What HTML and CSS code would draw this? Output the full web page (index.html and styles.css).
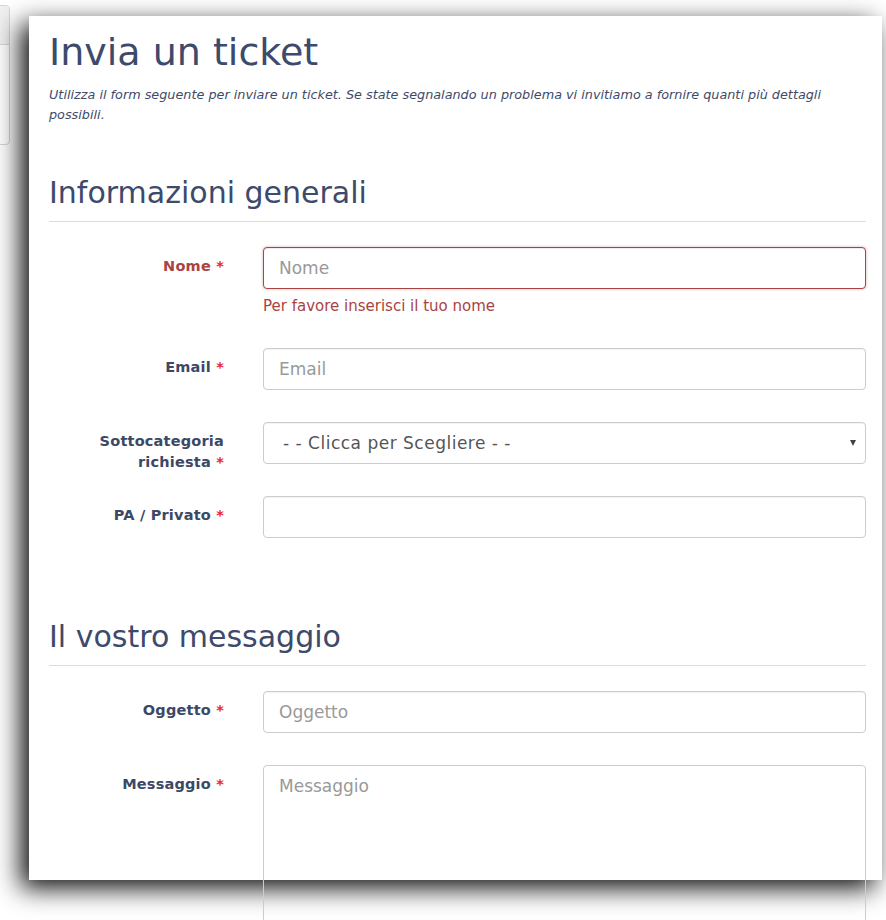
FILE: index.html
```html
<!DOCTYPE html>
<html lang="it">
<head>
<meta charset="utf-8">
<title>Invia un ticket</title>
<link rel="stylesheet" href="styles.css">
</head>
<body>
<div class="desk">
  <div class="bgcard"><div class="bgcard-head"></div></div>
  <div class="panel">
    <h1 class="title">Invia un ticket</h1>
    <p class="intro">Utilizza il form seguente per inviare un ticket. Se state segnalando un problema vi invitiamo a fornire quanti più dettagli possibili.</p>

    <h2 class="section">Informazioni generali</h2>

    <div class="group has-error">
      <label class="label">Nome <span class="req">*</span></label>
      <div class="field">
        <input class="control" type="text" placeholder="Nome">
        <div class="help">Per favore inserisci il tuo nome</div>
      </div>
    </div>

    <div class="group">
      <label class="label">Email <span class="req">*</span></label>
      <div class="field">
        <input class="control" type="text" placeholder="Email">
      </div>
    </div>

    <div class="group">
      <label class="label">Sottocategoria richiesta&nbsp;<span class="req">*</span></label>
      <div class="field select-wrap">
        <select class="control select">
          <option>- - Clicca per Scegliere - -</option>
        </select>
      </div>
    </div>

    <div class="group">
      <label class="label">PA / Privato <span class="req">*</span></label>
      <div class="field">
        <input class="control" type="text">
      </div>
    </div>

    <h2 class="section section-gap">Il vostro messaggio</h2>

    <div class="group">
      <label class="label">Oggetto <span class="req">*</span></label>
      <div class="field">
        <input class="control" type="text" placeholder="Oggetto">
      </div>
    </div>

    <div class="group">
      <label class="label">Messaggio <span class="req">*</span></label>
      <div class="field">
        <textarea class="control textarea" placeholder="Messaggio"></textarea>
      </div>
    </div>
  </div>
</div>
</body>
</html>
```
FILE: styles.css
```css
html, body {
  margin: 0;
  padding: 0;
  background: #ffffff;
  overflow: hidden;
}

body {
  font-family: "DejaVu Sans", Verdana, sans-serif;
  color: #3d4a69;
}

.desk {
  position: relative;
  width: 886px;
  height: 920px;
  padding: 16px 0 0 29px;
  box-sizing: border-box;
}

.bgcard {
  position: absolute;
  left: -20px;
  top: 5px;
  width: 30px;
  height: 140px;
  box-sizing: border-box;
  border: 1px solid #d6d6d6;
  border-radius: 4px;
  background: #ffffff;
  overflow: hidden;
}

.bgcard-head {
  height: 38px;
  background: #f0f0f0;
  border-bottom: 1px solid #d6d6d6;
}

.panel {
  position: relative;
  z-index: 1;
  width: 853px;
  height: 864px;
  box-sizing: border-box;
  padding: 15px 16px 0 20px;
  background: #ffffff;
  box-shadow: -8px 8px 24px rgba(0, 0, 0, 0.95);
}

.title {
  margin: 0;
  font-size: 38px;
  line-height: 42px;
  font-weight: normal;
  color: #3d4a6b;
}

.intro {
  margin: 12px 0 0;
  font-size: 12.8px;
  line-height: 20px;
  font-style: italic;
  color: #3d4a69;
}

.section {
  margin: 50px 0 25px;
  padding-bottom: 10px;
  border-bottom: 1px solid #dcdcdc;
  font-size: 30px;
  line-height: 36px;
  font-weight: normal;
  color: #3d4a6b;
}

.section-gap {
  margin-top: 81px;
}

.group {
  display: grid;
  grid-template-columns: 175px 1fr;
  column-gap: 39px;
  align-items: start;
  margin-bottom: 32px;
}

.label {
  height: 42px;
  box-sizing: border-box;
  padding-top: 9px;
  text-align: right;
  font-size: 14.5px;
  letter-spacing: 0.2px;
  line-height: 21px;
  font-weight: bold;
  color: #3b4866;
}

.req {
  color: #e8252e;
}

.field {
  position: relative;
}

.control {
  display: block;
  width: 100%;
  height: 42px;
  box-sizing: border-box;
  margin: 0;
  padding: 0 15px;
  border: 1px solid #cccccc;
  border-radius: 4px;
  background: #ffffff;
  font-family: "DejaVu Sans", Verdana, sans-serif;
  font-size: 17px;
  color: #555555;
  box-shadow: inset 0 1px 1px rgba(0, 0, 0, 0.05);
  outline: none;
}

.control::placeholder {
  color: #999999;
  opacity: 1;
}

.has-error .label {
  color: #a94442;
}

.has-error .control {
  border-color: #a94442;
  box-shadow: inset 0 1px 1px rgba(0, 0, 0, 0.075), 0 0 3px rgba(169, 68, 66, 0.45);
}

.help {
  margin-top: 7px;
  font-size: 15px;
  line-height: 20px;
  color: #a94442;
}

.select {
  appearance: none;
  -webkit-appearance: none;
  padding-left: 19px;
  letter-spacing: 0.5px;
  color: #555555;
}

.select-wrap::after {
  content: "";
  position: absolute;
  right: 10px;
  top: 18px;
  border-left: 3px solid transparent;
  border-right: 3px solid transparent;
  border-top: 6px solid #444444;
}

.textarea {
  height: 200px;
  padding-top: 9px;
  line-height: 22px;
  resize: none;
  background: transparent;
  box-shadow: none;
}
```
